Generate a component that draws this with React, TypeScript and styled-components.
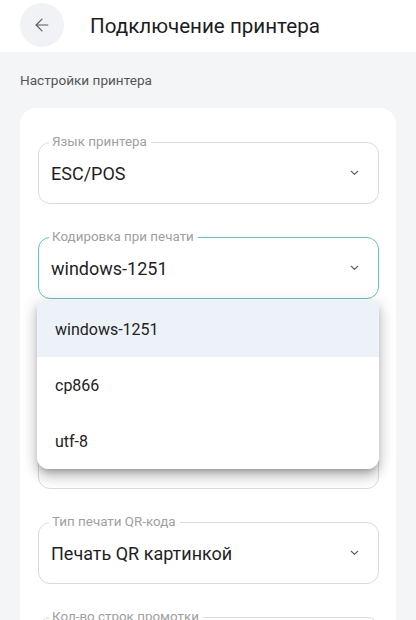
import React from "react"
import styled, { createGlobalStyle } from "styled-components"
import { ArrowLeft } from "lucide-react"

const Global = createGlobalStyle`
    html, body {
        margin: 0;
        padding: 0;
        background: #f4f5f7;
        font-family: Roboto, "Noto Sans", sans-serif;
        overflow: hidden;
    }
    * { box-sizing: border-box; }
`

type FieldData = { label: string, value: string, focused?: boolean, options?: string[] }

const fields: FieldData[] = [
    { label: "Язык принтера", value: "ESC/POS" },
    { label: "Кодировка при печати", value: "windows-1251", focused: true, options: ["windows-1251", "cp866", "utf-8"] },
    { label: "Ширина ленты", value: "58 мм" },
    { label: "Размер шрифта", value: "Обычный" },
    { label: "Тип печати QR-кода", value: "Печать QR картинкой" },
    { label: "Кол-во строк промотки", value: "3" },
]

function Chevron() {
    return (
        <svg width="9" height="6" viewBox="0 0 9 6" fill="none">
            <path d="M1.3 1.3 L4.5 4.4 L7.7 1.3" stroke="#5f5f5f" strokeWidth="1.2" strokeLinecap="round" strokeLinejoin="round" />
        </svg>
    )
}

function Field({ data }: { data: FieldData }) {
    return (
        <SFieldWrap>
            <SFieldset focused={!!data.focused}>
                <SLegend>{data.label}</SLegend>
                <SValueRow>
                    <SValue>{data.value}</SValue>
                    <Chevron />
                </SValueRow>
            </SFieldset>
            {data.options
                ? <SMenu>
                    {data.options.map(o => (
                        <SMenuItem key={o} active={o == data.value}>{o}</SMenuItem>
                    ))}
                </SMenu>
                : ""}
        </SFieldWrap>
    )
}

export default function App() {
    return <>
        <Global />
        <SHeader>
            <SBack><ArrowLeft size={20} strokeWidth={1.4} color="#5a5a5a" /></SBack>
            <STitle>Подключение принтера</STitle>
        </SHeader>
        <SSection>Настройки принтера</SSection>
        <SCard>
            {fields.map(f => <Field key={f.label} data={f} />)}
        </SCard>
    </>
}

const SHeader = styled.div`
    height: 52px;
    background: #fff;
    display: flex;
    align-items: center;
    padding-left: 20px;
`
const SBack = styled.div`
    width: 44px;
    height: 44px;
    border-radius: 50%;
    background: #f1f2f6;
    display: flex;
    align-items: center;
    justify-content: center;
    margin-top: -2px;
`
const STitle = styled.div`
    margin-left: 26px;
    font-size: 20.6px;
    color: #1c1c1c;
    margin-top: -1px;
`
const SSection = styled.div`
    padding: 20px 20px 0;
    height: 56px;
    font-size: 13.6px;
    line-height: 16px;
    color: #555;
`
const SCard = styled.div`
    margin: 0 20px;
    background: #fff;
    border-radius: 16px;
    padding: 27px 17px 20px 18px;
    display: flex;
    flex-direction: column;
    gap: 26px;
`
const SFieldWrap = styled.div`
    position: relative;
`
const SFieldset = styled.fieldset<{ focused: boolean }>`
    margin: 0;
    padding: 0 19px 6px 12px;
    border: 1px solid ${p => p.focused ? "#62c2c4" : "#dadada"};
    border-radius: 12px;
    min-width: 0;
`
const SLegend = styled.legend`
    font-size: 13.4px;
    line-height: 14px;
    color: #a0a0a0;
    padding: 0 4px 0 3px;
    margin-left: -2px;
`
const SValueRow = styled.div`
    height: 48px;
    display: flex;
    align-items: center;
    justify-content: space-between;
`
const SValue = styled.span`
    font-size: 18px;
    color: #1f1f1f;
`
const SMenu = styled.div`
    position: absolute;
    left: -1px;
    right: 0;
    top: calc(100% + 2px);
    z-index: 5;
    background: #fff;
    border-radius: 4px 4px 12px 12px;
    box-shadow: 0 5px 6px -3px rgba(0,0,0,0.25), 0 8px 12px 1px rgba(0,0,0,0.14), 0 3px 16px 2px rgba(0,0,0,0.12);
    overflow: hidden;
`
const SMenuItem = styled.div<{ active: boolean }>`
    height: 56px;
    display: flex;
    align-items: center;
    padding-left: 18px;
    font-size: 16px;
    color: #222;
    background: ${p => p.active ? "#edf2f9" : "#fff"};
`
